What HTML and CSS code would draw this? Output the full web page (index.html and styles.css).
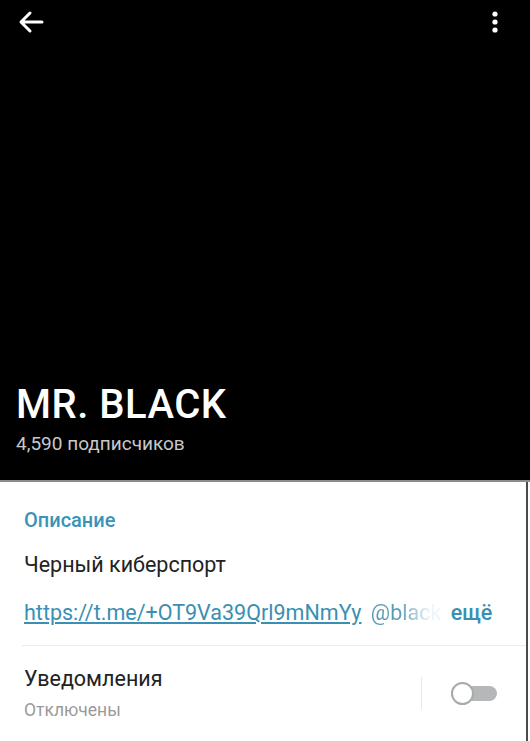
FILE: index.html
```html
<!DOCTYPE html>
<html lang="ru">
<head>
<meta charset="UTF-8">
<meta name="viewport" content="width=device-width, initial-scale=1.0">
<title>MR. BLACK</title>
<link rel="stylesheet" href="styles.css">
</head>
<body>
    <header class="cover">
        <div class="topbar">
            <svg class="icon-back" width="26" height="24" viewBox="0 0 26 24">
                <path d="M24 12H4M12 3L3 12l9 9" fill="none" stroke="#fff" stroke-width="3" stroke-linecap="round" stroke-linejoin="round"/>
            </svg>
            <svg class="icon-menu" width="8" height="24" viewBox="0 0 8 24">
                <circle cx="4" cy="4" r="2.6" fill="#fff"/>
                <circle cx="4" cy="12" r="2.6" fill="#fff"/>
                <circle cx="4" cy="20" r="2.6" fill="#fff"/>
            </svg>
        </div>
        <div class="channel">
            <h1>MR. BLACK</h1>
            <p class="subs">4,590 подписчиков</p>
        </div>
    </header>

    <main class="info">
        <section class="about">
            <h2>Описание</h2>
            <p class="desc">Черный киберспорт</p>
            <p class="links">
                <a href="#">https://t.me/+OT9Va39Qrl9mNmYy</a>
                <span class="fade">@black</span>
                <span class="more">ещё</span>
            </p>
        </section>

        <section class="notify">
            <div class="notify-text">
                <div class="notify-title">Уведомления</div>
                <div class="notify-state">Отключены</div>
            </div>
            <div class="notify-switch">
                <span class="divider"></span>
                <span class="toggle"><span class="knob"></span></span>
            </div>
        </section>
    </main>
</body>
</html>
```

FILE: styles.css
```css
body {
    margin: 0;
    background-color: #fff;
    font-family: Roboto, "Noto Sans", sans-serif;
    width: 530px;
    height: 741px;
    overflow: hidden;
}

/* Верхняя черная часть */
.cover {
    background-color: #000;
    height: 480px;
    border-bottom: 2px solid #8c8c8c;
    display: flex;
    flex-direction: column;
    justify-content: space-between;
}

.topbar {
    display: flex;
    justify-content: space-between;
    padding: 10px 31px 0 18px;
}

.channel {
    padding: 0 16px 25px;
}

.channel h1 {
    margin: 0;
    color: #fff;
    font-size: 40px;
    font-weight: 500;
    letter-spacing: 0.5px;
    line-height: 44px;
}

.subs {
    margin: 6px 0 0;
    color: #c8c8c8;
    font-size: 19px;
    line-height: 22px;
}

/* Белая часть */
.info {
    border-right: 2px solid #4a4a4a;
    margin-right: 2px;
    height: 259px;
    box-sizing: border-box;
}

.about {
    margin-left: 22px;
    padding: 26px 0 0 2px;
    border-bottom: 1px solid #ececec;
}

.about h2 {
    margin: 0;
    color: #3b93b6;
    font-size: 20px;
    font-weight: 500;
    line-height: 24px;
}

.desc {
    margin: 20px 0 0;
    color: #222;
    font-size: 21.5px;
    line-height: 26px;
}

.links {
    margin: 22px 0 0;
    padding-bottom: 19px;
    font-size: 21.5px;
    line-height: 26px;
    white-space: nowrap;
}

.links a {
    color: #3a8fb2;
    text-decoration: underline;
}

.fade {
    margin-left: 4px;
    background: linear-gradient(90deg, #5a9ab5 40%, rgba(90, 154, 181, 0.1) 85%);
    -webkit-background-clip: text;
    background-clip: text;
    color: transparent;
}

.more {
    margin-left: 4px;
    color: #3a8fb2;
    font-weight: 500;
}

.notify {
    display: flex;
    align-items: flex-start;
    justify-content: space-between;
    padding: 20px 29px 0 24px;
}

.notify-title {
    color: #222;
    font-size: 21.5px;
    line-height: 26px;
}

.notify-state {
    margin-top: 7px;
    color: #9a9a9a;
    font-size: 17.5px;
    line-height: 22px;
}

.notify-switch {
    display: flex;
    align-items: center;
    gap: 29px;
    margin-top: 11px;
}

.divider {
    width: 1px;
    height: 32px;
    background-color: #e6e6e6;
}

.toggle {
    position: relative;
    width: 46px;
    height: 15px;
    border-radius: 8px;
    background-color: #b5b7b9;
}

.knob {
    position: absolute;
    left: 0;
    top: -4px;
    width: 19px;
    height: 19px;
    border-radius: 50%;
    background-color: #fff;
    border: 2.5px solid #a8aaac;
}
```
